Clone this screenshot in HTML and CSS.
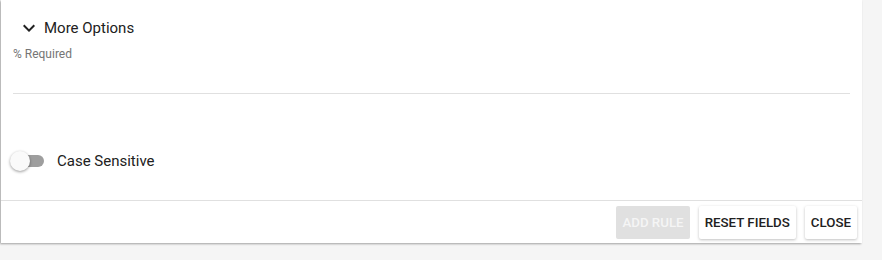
FILE: index.html
```html
<!DOCTYPE html>
<html lang="en">
<head>
    <meta charset="UTF-8">
    <title>Rule Editor</title>
    <link rel="stylesheet" href="styles.css">
</head>
<body>

<div class="card">
    <div class="card-body">
        <div class="more-options">
            <svg class="chevron" viewBox="0 0 24 24" width="24" height="24"><path d="M7.41 8.59L12 13.17l4.59-4.58L18 10l-6 6-6-6 1.41-1.41z" fill="#212121"/></svg>
            <span>More Options</span>
        </div>
        <div class="hint">% Required</div>

        <div class="divider"></div>

        <label class="toggle-row">
            <span class="toggle"><span class="track"></span><span class="thumb"></span></span>
            <span class="toggle-label">Case Sensitive</span>
        </label>
    </div>

    <div class="card-actions">
        <button class="btn" disabled>Add Rule</button>
        <button class="btn">Reset Fields</button>
        <button class="btn">Close</button>
    </div>
</div>

</body>
</html>
```

FILE: styles.css
```css
body {
    margin: 0;
    background: #f5f5f5;
    font-family: Roboto, "Liberation Sans", sans-serif;
    color: #212121;
    height: 260px;
    overflow: hidden;
}

.card {
    width: 861px;
    margin-left: 1px;
    background: #fff;
    box-shadow: -1px 1px 2px rgba(0, 0, 0, 0.35);
}

.card-body {
    padding: 16px 12px 0 12px;
    border-bottom: 1px solid #e0e0e0;
}

.more-options {
    display: flex;
    align-items: center;
    height: 24px;
    font-size: 15px;
}

.chevron {
    margin-left: 4px;
    margin-right: 3px;
}

.hint {
    font-size: 12px;
    color: #757575;
    margin-top: 7px;
    height: 14px;
    line-height: 14px;
}

.divider {
    height: 1px;
    background: #e0e0e0;
    margin-top: 32px;
}

.toggle-row {
    display: flex;
    align-items: center;
    height: 24px;
    margin-top: 55px;
    padding-bottom: 27px;
    font-size: 15px;
}

.toggle {
    position: relative;
    width: 34px;
    height: 20px;
    margin-left: -3px;
    margin-right: 13px;
}

.track {
    position: absolute;
    left: 3px;
    top: 4px;
    width: 31px;
    height: 12px;
    border-radius: 6px;
    background: #9e9e9e;
}

.thumb {
    position: absolute;
    left: 0;
    top: 0;
    width: 20px;
    height: 20px;
    border-radius: 50%;
    background: #fafafa;
    box-shadow: 0 1px 3px rgba(0, 0, 0, 0.4);
}

.card-actions {
    display: flex;
    justify-content: flex-end;
    gap: 9px;
    padding: 5px 5px 4px 0;
}

.btn {
    height: 33px;
    padding: 0 6px;
    border: none;
    border-radius: 2px;
    background: #fff;
    font-family: Roboto, "Liberation Sans", sans-serif;
    font-size: 13.3px;
    font-weight: 500;
    text-transform: uppercase;
    color: #212121;
    box-shadow: 0 1px 3px rgba(0, 0, 0, 0.25);
}

.btn:disabled {
    background: #e0e0e0;
    color: #f5f5f5;
    box-shadow: none;
}
```
